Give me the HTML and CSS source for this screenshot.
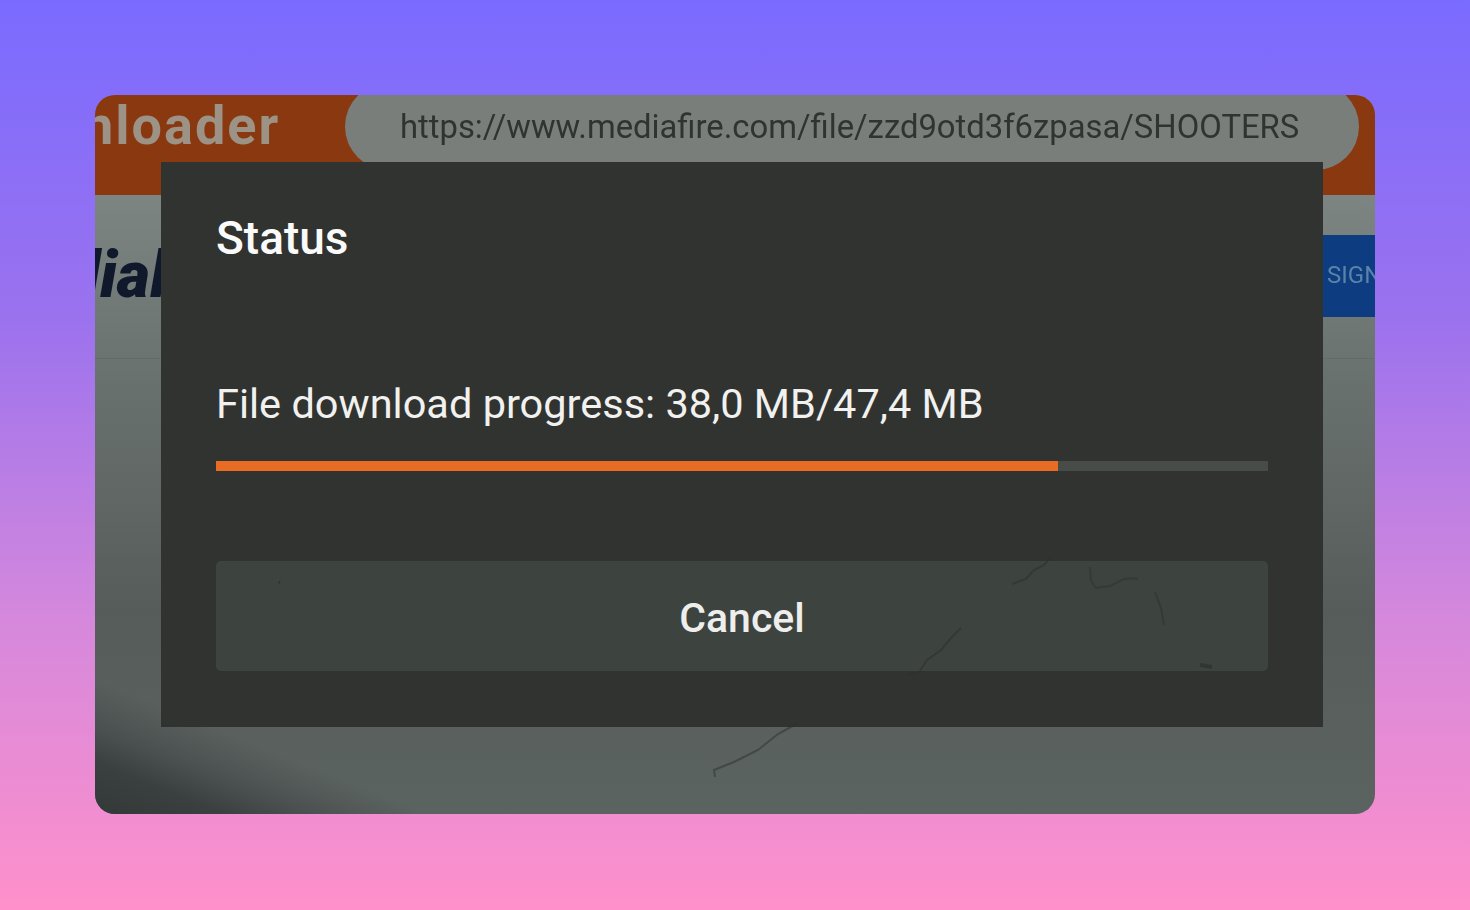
FILE: index.html
```html
<!DOCTYPE html>
<html lang="en">
<head>
  <meta charset="UTF-8">
  <meta name="viewport" content="width=device-width, initial-scale=1.0">
  <title>File download status</title>
  <link rel="stylesheet" href="styles.css">
</head>
<body>
  <div class="screenshot">
    <!-- Page behind the dialog -->
    <div class="site-header">
      <div class="brand">nloader</div>
      <div class="url-pill">https://www.mediafire.com/file/zzd9otd3f6zpasa/SHOOTERS</div>
    </div>
    <div class="site-nav">
      <div class="site-logo">dial</div>
      <div class="sign-button">SIGN</div>
    </div>
    <div class="corner-shade"></div>

    <!-- Status dialog -->
    <div class="dialog">
      <h2 class="dialog-title">Status</h2>
      <p class="progress-label">File download progress: 38,0 MB/47,4 MB</p>
      <div class="progress-track">
        <div class="progress-fill" style="width: 80%;"></div>
      </div>
      <button class="cancel-button" type="button">Cancel</button>
    </div>

    <!-- Scratches on the phone screen -->
    <svg class="scratches" viewBox="0 0 1280 719" fill="none">
      <path d="M184 487l1 .5" stroke="#2b302e" stroke-width="3"/>
      <path d="M917 489l14-5 8-9 10-5 6-7" stroke="#2b302e" stroke-width="2" opacity=".6"/>
      <path d="M995 472l1 14 5 7 14-2 14-7 8-1 6 1M1060 497l6 16 3 17" stroke="#2b302e" stroke-width="2" opacity=".5"/>
      <path d="M814 580l10-3 8-12 14-10 10-12 10-10" stroke="#2b302e" stroke-width="2" opacity=".55"/>
      <path d="M1105 570l12 2" stroke="#2b302e" stroke-width="4" opacity=".7"/>
      <path d="M620 682l-1-7 20-8 24-12 20-16 20-11" stroke="#2b302e" stroke-width="2" opacity=".5"/>
    </svg>
  </div>
</body>
</html>
```

FILE: styles.css
```css
* {
  box-sizing: border-box;
}

body {
  margin: 0;
  height: 910px;
  padding-top: 95px;
  overflow: hidden;
  background: linear-gradient(180deg, #7a6bff 0%, #9b72ee 35%, #d588dc 68%, #ff90cb 100%);
  font-family: Roboto, "Liberation Sans", sans-serif;
  display: flex;
  justify-content: center;
  align-items: flex-start;
}

.screenshot {
  position: relative;
  width: 1280px;
  height: 719px;
  border-radius: 20px;
  overflow: hidden;
  background: linear-gradient(180deg, #7d8583 0%, #7d8583 14%, #69716f 40%, #565c59 72%, #5b6361 100%);
  filter: blur(0.5px);
}

.site-header {
  height: 100px;
  background: #8a3810;
  display: flex;
  align-items: flex-start;
}

.brand {
  flex: none;
  width: 262px;
  margin-left: -12px;
  font-size: 54px;
  line-height: 62px;
  font-weight: 700;
  letter-spacing: 2px;
  color: #9c9286;
}

.url-pill {
  flex: none;
  width: 1014px;
  height: 87px;
  margin-top: -12px;
  border-radius: 44px;
  background: #797e7b;
  color: #2f3432;
  font-size: 32.8px;
  line-height: 88px;
  padding-left: 55px;
  white-space: nowrap;
}

.site-nav {
  height: 164px;
  border-bottom: 1px solid #646b69;
  display: flex;
  justify-content: space-between;
  align-items: flex-start;
  overflow: hidden;
}

.site-logo {
  margin: 46px 0 0 -30px;
  font-size: 64px;
  line-height: 70px;
  font-weight: 900;
  font-style: italic;
  color: #10182c;
}

.sign-button {
  width: 52px;
  height: 82px;
  margin-top: 40px;
  padding-left: 4px;
  background: #0d3c80;
  color: #5a83a8;
  font-size: 24px;
  line-height: 80px;
  white-space: nowrap;
  overflow: hidden;
}

.corner-shade {
  position: absolute;
  left: 0;
  bottom: 0;
  width: 320px;
  height: 130px;
  background: linear-gradient(to top right, #333937 0%, #3a403f 20%, #4a504f 33%, rgba(85, 92, 90, 0) 52%);
}

.dialog {
  position: absolute;
  left: 66px;
  top: 67px;
  width: 1162px;
  height: 565px;
  padding: 49px 55px 0;
  background: #313330;
  color: #fafafa;
}

.dialog-title {
  margin: 0;
  font-size: 46px;
  line-height: 54px;
  font-weight: 500;
}

.progress-label {
  margin: 112px 0 0;
  font-size: 41.5px;
  line-height: 54px;
  color: #f1f1ef;
}

.progress-track {
  height: 10px;
  margin-top: 30px;
  background: #484c49;
}

.progress-fill {
  height: 100%;
  background: #e96c25;
}

.cancel-button {
  display: block;
  width: 100%;
  height: 110px;
  margin-top: 90px;
  padding: 4px 0 0;
  border: 0;
  border-radius: 5px;
  background: #3d4440;
  color: #eeeeec;
  font-family: inherit;
  font-size: 41px;
  font-weight: 500;
}

.scratches {
  position: absolute;
  left: 0;
  top: 0;
  width: 100%;
  height: 100%;
  pointer-events: none;
}
```
